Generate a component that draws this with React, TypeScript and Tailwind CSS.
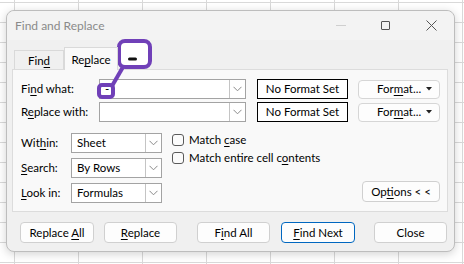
import type { ReactNode } from "react";

function U({ children }: { children: ReactNode }) {
  return <span className="underline decoration-1 underline-offset-[2px]">{children}</span>;
}

function Chevron() {
  return (
    <svg width="9" height="6" viewBox="0 0 9 6" fill="none">
      <path d="M0.5 0.8 L4.5 4.8 L8.5 0.8" stroke="#8a8a8a" strokeWidth="1" />
    </svg>
  );
}

function Combo({ className, value }: { className: string; value?: string }) {
  return (
    <div className={`flex h-[20px] border border-[#a3a3a3] bg-white ${className}`}>
      <div className="flex flex-1 items-center pl-[5px] leading-none">{value}</div>
      <div className="flex w-[16px] items-center justify-center border-l border-[#c4c4c4]">
        <Chevron />
      </div>
    </div>
  );
}

function NoFormat() {
  return (
    <div className="ml-[11px] flex h-[20px] w-[91px] items-center justify-center border border-black bg-white">
      No Format Set
    </div>
  );
}

function FormatButton() {
  return (
    <div className="ml-[10px] flex h-[19px] w-[82px] items-center rounded-[4px] border border-[#d6d6d6] bg-[#fdfdfd] pl-[18px]">
      <span>
        For<U>m</U>at...
      </span>
      <svg className="ml-auto mr-[7px]" width="6" height="4" viewBox="0 0 6 4">
        <path d="M0 0 H6 L3 3.5 Z" fill="#222" />
      </svg>
    </div>
  );
}

function Button({ children, className }: { children: ReactNode; className: string }) {
  return (
    <div
      className={`flex h-[21px] items-center justify-center rounded-[4px] border bg-[#fdfdfd] ${className}`}
    >
      {children}
    </div>
  );
}

function Check({ children }: { children: ReactNode }) {
  return (
    <div className="flex h-[18px] items-center">
      <div className="h-[12px] w-[12px] rounded-[3px] border border-[#5a5a5a] bg-[#fbfbfb]" />
      <span className="ml-[5px]">{children}</span>
    </div>
  );
}

export default function App() {
  return (
    <div className="relative h-[264px] w-[464px] overflow-hidden bg-white bg-[linear-gradient(to_right,#d9d9d9_1px,transparent_1px),linear-gradient(to_bottom,#d9d9d9_1px,transparent_1px)] bg-[length:64px_20px] bg-[position:14px_2px] pl-[6px] pt-[10px] font-['Lato',sans-serif] text-[11.5px] text-black">
      <div className="flex h-[242px] w-[449px] flex-col rounded-[8px] border border-[#bdbdbd] bg-[#f0f0f0] shadow-[0_2px_10px_rgba(0,0,0,0.18)]">
        {/* title bar */}
        <div className="flex h-[29px] items-center rounded-t-[8px] bg-[#f3f3f3] pl-[8px]">
          <span className="text-[12px] text-[#8a8a8a]">Find and Replace</span>
          <div className="ml-auto flex h-full">
            <div className="flex w-[45px] items-center justify-center">
              <div className="h-px w-[10px] bg-[#cfcfcf]" />
            </div>
            <div className="flex w-[45px] items-center justify-center">
              <div className="h-[9px] w-[9px] rounded-[1px] border border-[#555]" />
            </div>
            <div className="flex w-[46px] items-center justify-center">
              <svg width="11" height="11" viewBox="0 0 11 11">
                <path d="M0.5 0.5 L10.5 10.5 M10.5 0.5 L0.5 10.5" stroke="#555" strokeWidth="1" />
              </svg>
            </div>
          </div>
        </div>

        {/* body */}
        <div className="flex flex-1 flex-col pl-[5px] pr-[6px]">
          {/* tabs */}
          <div className="flex h-[29px] items-end pl-[2px]">
            <div className="-mb-px flex h-[20px] w-[50px] items-center justify-center border border-b-0 border-[#d9d9d9] bg-[#f0f0f0]">
              Fin<U>d</U>
            </div>
            <div className="relative z-10 -mb-px flex h-[23px] w-[54px] items-start justify-center border border-b-0 border-[#d9d9d9] bg-[#f9f9f9] pt-[3px]">
              <span>
                Re<U>p</U>lace
              </span>
            </div>
          </div>

          {/* panel */}
          <div className="flex h-[143px] flex-col border border-[#dcdcdc] bg-[#f9f9f9] pl-[8px] pr-[7px] pt-[9px]">
            <div className="flex items-center">
              <span className="w-[78px]">
                Fi<U>n</U>d what:
              </span>
              <Combo className="w-[147px]" value="-" />
              <NoFormat />
              <FormatButton />
            </div>
            <div className="mt-[3px] flex items-center">
              <span className="w-[78px]">
                R<U>e</U>place with:
              </span>
              <Combo className="w-[147px]" />
              <NoFormat />
              <FormatButton />
            </div>

            <div className="mt-[11px] flex">
              <div className="flex flex-col gap-[5px]">
                <div className="flex items-center">
                  <span className="w-[50px]">
                    Wit<U>h</U>in:
                  </span>
                  <Combo className="w-[91px]" value="Sheet" />
                </div>
                <div className="flex items-center">
                  <span className="w-[50px]">
                    <U>S</U>earch:
                  </span>
                  <Combo className="w-[91px]" value="By Rows" />
                </div>
                <div className="flex items-center">
                  <span className="w-[50px]">
                    <U>L</U>ook in:
                  </span>
                  <Combo className="w-[91px]" value="Formulas" />
                </div>
              </div>
              <div className="-mt-[2px] ml-[10px] flex flex-col">
                <Check>
                  Match <U>c</U>ase
                </Check>
                <Check>
                  Match entire cell c<U>o</U>ntents
                </Check>
              </div>
              <Button className="mb-[1px] ml-auto w-[78px] self-end border-[#d0d0d0]">
                <span>
                  Op<U>t</U>ions &lt; &lt;
                </span>
              </Button>
            </div>
          </div>

          {/* buttons */}
          <div className="mt-[10px] flex pl-[8px]">
            <Button className="w-[74px] border-[#d0d0d0]">
              <span>
                Replace <U>A</U>ll
              </span>
            </Button>
            <Button className="ml-[10px] w-[73px] border-[#d0d0d0]">
              <span>
                <U>R</U>eplace
              </span>
            </Button>
            <Button className="ml-[20px] w-[73px] border-[#d0d0d0]">
              <span>
                F<U>i</U>nd All
              </span>
            </Button>
            <Button className="ml-[11px] w-[74px] border-[#0067c0]">
              <span>
                <U>F</U>ind Next
              </span>
            </Button>
            <Button className="ml-[19px] w-[73px] border-[#d0d0d0]">
              <span>Close</span>
            </Button>
          </div>
        </div>
      </div>

      {/* annotation callout */}
      <svg
        className="pointer-events-none absolute left-0 top-0"
        width="464"
        height="264"
        viewBox="0 0 464 264"
      >
        <line x1="112" y1="86" x2="123" y2="67" stroke="#7040b8" strokeWidth="4" />
        <rect x="119" y="41" width="31" height="26" rx="6" fill="#fff" stroke="#7040b8" strokeWidth="4" />
        <rect x="128" y="57.5" width="9" height="3" rx="1.5" fill="#111" />
        <rect x="99" y="85" width="14" height="12" rx="3" fill="none" stroke="#7040b8" strokeWidth="4" />
      </svg>
    </div>
  );
}
